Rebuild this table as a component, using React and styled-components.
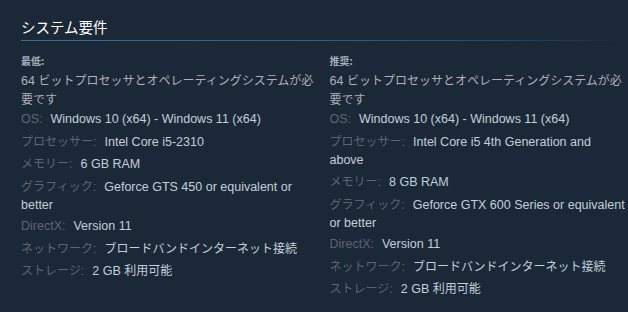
import React from "react";
import styled, { createGlobalStyle } from "styled-components";

const Global = createGlobalStyle`
  html, body { margin: 0; padding: 0; background: #1b2838; }
  body {
    font-family: "Liberation Sans", Arial, "Noto Sans CJK JP", sans-serif;
    -webkit-font-smoothing: antialiased;
  }
`;

const Section = styled.section`
  padding: 17px 2px 0 21px;
  min-height: 312px;
  box-sizing: border-box;
`;

const Title = styled.h2`
  margin: 0;
  padding: 0 0 4px;
  font-family: "Noto Sans CJK JP", sans-serif;
  font-weight: normal;
  font-size: 14.5px;
  line-height: 20px;
  color: #ffffff;
  background: linear-gradient(
      to right,
      #3a6d8e 0%,
      #336282 45%,
      #284a64 80%,
      rgba(27, 40, 56, 0) 100%
    )
    left bottom / 100% 1px no-repeat;
`;

const Columns = styled.div`
  margin-top: 13px;
  display: grid;
  grid-template-columns: 1fr 1fr;
  column-gap: 12px;
`;

const Col = styled.div`
  min-width: 0;
`;

const ColHead = styled.div`
  font-family: "Noto Sans CJK JP", sans-serif;
  font-size: 10px;
  line-height: 14px;
  font-weight: bold;
  color: #a3b0bd;
  margin-bottom: 3px;
`;

const List = styled.ul`
  list-style: none;
  margin: 0;
  padding: 0;
`;

const Item = styled.li`
  font-size: 12.5px;
  line-height: 18px;
  color: ${(p) => (p.$note ? "#acb2b8" : "#c3cfda")};
  margin-bottom: ${(p) => (p.$note ? "1px" : "3.5px")};
`;

const Label = styled.span`
  color: #5b6672;
  margin-right: 8px;
`;

const Jp = styled.span`
  font-family: "Noto Sans CJK JP", sans-serif;
  font-size: 12px;
`;

const Column = ({ head, rows }) => (
  <Col>
    <ColHead>{head}</ColHead>
    <List>
      <Item $note>
        64 <Jp>ビットプロセッサとオペレーティングシステムが必要です</Jp>
      </Item>
      {rows.map((r, i) => (
        <Item key={i}>
          <Label>
            {r.jpLabel ? <Jp>{r.label}</Jp> : r.label}:
          </Label>
          {r.value}
        </Item>
      ))}
    </List>
  </Col>
);

const minRows = [
  { label: "OS", value: "Windows 10 (x64) - Windows 11 (x64)" },
  { label: "プロセッサー", jpLabel: true, value: "Intel Core i5-2310" },
  { label: "メモリー", jpLabel: true, value: "6 GB RAM" },
  { label: "グラフィック", jpLabel: true, value: "Geforce GTS 450 or equivalent or better" },
  { label: "DirectX", value: "Version 11" },
  { label: "ネットワーク", jpLabel: true, value: <Jp>ブロードバンドインターネット接続</Jp> },
  { label: "ストレージ", jpLabel: true, value: <>2 GB <Jp>利用可能</Jp></> },
];

const recRows = [
  { label: "OS", value: "Windows 10 (x64) - Windows 11 (x64)" },
  { label: "プロセッサー", jpLabel: true, value: "Intel Core i5 4th Generation and above" },
  { label: "メモリー", jpLabel: true, value: "8 GB RAM" },
  { label: "グラフィック", jpLabel: true, value: "Geforce GTX 600 Series or equivalent or better" },
  { label: "DirectX", value: "Version 11" },
  { label: "ネットワーク", jpLabel: true, value: <Jp>ブロードバンドインターネット接続</Jp> },
  { label: "ストレージ", jpLabel: true, value: <>2 GB <Jp>利用可能</Jp></> },
];

export default function App() {
  return (
    <>
      <Global />
      <Section>
        <Title>システム要件</Title>
        <Columns>
          <Column head="最低:" rows={minRows} />
          <Column head="推奨:" rows={recRows} />
        </Columns>
      </Section>
    </>
  );
}
